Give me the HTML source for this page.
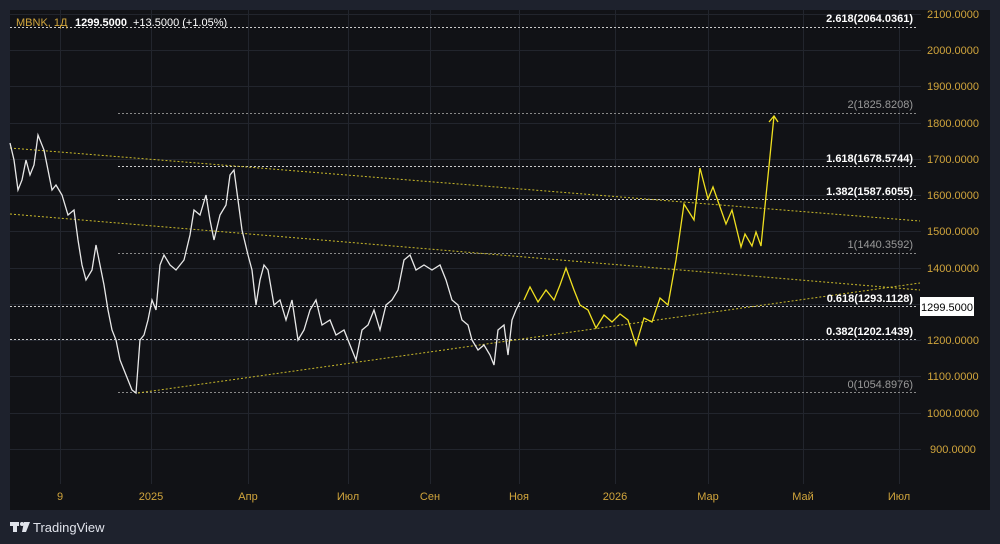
<!DOCTYPE html><html><head><meta charset="utf-8"><style>
body{margin:0;width:1000px;height:544px;background:#1e222d;overflow:hidden;font-family:"Liberation Sans",sans-serif}
#p{position:absolute;left:10px;top:10px;width:980px;height:500px;background:#111216}
.t{position:absolute;font-size:11px;color:#d1a53c}
</style></head><body><div id="p"></div>
<svg width="1000" height="544" style="position:absolute;left:0;top:0" font-family="Liberation Sans, sans-serif">
<g stroke="#22252d" stroke-width="1">
<line x1="60.5" y1="10" x2="60.5" y2="484"/><line x1="151.5" y1="10" x2="151.5" y2="484"/><line x1="248.5" y1="10" x2="248.5" y2="484"/><line x1="348.5" y1="10" x2="348.5" y2="484"/><line x1="430.5" y1="10" x2="430.5" y2="484"/><line x1="519.5" y1="10" x2="519.5" y2="484"/><line x1="615.5" y1="10" x2="615.5" y2="484"/><line x1="708.5" y1="10" x2="708.5" y2="484"/><line x1="803.5" y1="10" x2="803.5" y2="484"/><line x1="899.5" y1="10" x2="899.5" y2="484"/>
<line x1="10" y1="14.5" x2="921" y2="14.5"/><line x1="10" y1="50.5" x2="921" y2="50.5"/><line x1="10" y1="86.5" x2="921" y2="86.5"/><line x1="10" y1="123.5" x2="921" y2="123.5"/><line x1="10" y1="159.5" x2="921" y2="159.5"/><line x1="10" y1="195.5" x2="921" y2="195.5"/><line x1="10" y1="231.5" x2="921" y2="231.5"/><line x1="10" y1="268.5" x2="921" y2="268.5"/><line x1="10" y1="304.5" x2="921" y2="304.5"/><line x1="10" y1="340.5" x2="921" y2="340.5"/><line x1="10" y1="376.5" x2="921" y2="376.5"/><line x1="10" y1="413.5" x2="921" y2="413.5"/><line x1="10" y1="449.5" x2="921" y2="449.5"/>
</g>
<g stroke-dasharray="2,2" stroke-width="1" fill="none">
<line x1="10" y1="27.5" x2="918" y2="27.5" stroke="#ccc"/>
<line x1="118" y1="113.5" x2="918" y2="113.5" stroke="#888"/>
<line x1="118" y1="166.5" x2="918" y2="166.5" stroke="#ccc"/>
<line x1="118" y1="199.5" x2="918" y2="199.5" stroke="#ccc"/>
<line x1="118" y1="253.5" x2="918" y2="253.5" stroke="#888"/>
<line x1="10" y1="306.5" x2="918" y2="306.5" stroke="#ccc"/>
<line x1="10" y1="339.5" x2="918" y2="339.5" stroke="#ccc"/>
<line x1="118" y1="392.5" x2="918" y2="392.5" stroke="#888"/>
<g stroke="#c9b92a"><line x1="10" y1="148" x2="920" y2="221"/><line x1="10" y1="214" x2="920" y2="290"/><line x1="138" y1="393" x2="920" y2="283"/></g>
</g>
<polyline fill="none" stroke="#e8e8e8" stroke-width="1.3" points="10,143 14,160 18,190 22,180 26,160 30,175 34,165 38,135 44,150 48,170 52,190 56,185 62,195 68,215 74,210 78,240 82,265 86,280 92,270 96,245 100,265 104,285 108,310 112,330 116,340 120,360 124,370 128,380 132,390 136,393 140,340 144,335 148,320 152,300 156,310 160,265 164,255 170,265 176,270 184,260 190,235 194,210 200,215 206,195 210,220 214,240 220,215 226,205 230,175 234,170 238,200 242,230 248,255 252,270 256,305 260,280 264,265 268,270 274,305 280,300 286,320 292,300 298,340 304,330 310,310 316,300 322,325 330,320 336,335 344,330 350,345 356,360 362,330 368,325 374,310 380,330 386,305 392,300 398,290 404,260 410,255 416,270 424,265 432,270 440,265 446,280 452,300 458,305 462,320 468,325 472,340 478,350 484,345 490,355 494,365 498,330 504,325 508,355 512,320 516,310 520,302"/>
<polyline fill="none" stroke="#f0e020" stroke-width="1.3" points="524,300 530,287 538,302 546,290 554,300 560,285 566,268 574,290 580,305 588,310 596,328 604,315 612,322 620,314 628,320 636,345 644,318 652,322 660,298 668,305 676,260 684,204 694,220 700,168 708,199 713,187 726,224 732,210 741,247 745,234 752,246 756,232 761,246 774,116"/>
<polyline fill="none" stroke="#f0e020" stroke-width="1.3" points="769,122 774,116 778,122"/>
<g font-size="11" font-weight="bold" fill="#fff" text-anchor="end">
<text x="913" y="22">2.618(2064.0361)</text><text x="913" y="162">1.618(1678.5744)</text><text x="913" y="195">1.382(1587.6055)</text><text x="913" y="302">0.618(1293.1128)</text><text x="913" y="335">0.382(1202.1439)</text></g>
<g font-size="11" fill="#999" text-anchor="end"><text x="913" y="108">2(1825.8208)</text><text x="913" y="248">1(1440.3592)</text><text x="913" y="388">0(1054.8976)</text></g>
<g font-size="11" fill="#d1a53c" text-anchor="middle">
<text x="953" y="18">2100.0000</text><text x="953" y="54">2000.0000</text><text x="953" y="90">1900.0000</text><text x="953" y="127">1800.0000</text><text x="953" y="163">1700.0000</text><text x="953" y="199">1600.0000</text><text x="953" y="235">1500.0000</text><text x="953" y="272">1400.0000</text><text x="953" y="344">1200.0000</text><text x="953" y="380">1100.0000</text><text x="953" y="417">1000.0000</text><text x="953" y="453">900.0000</text>
<text x="60" y="500">9</text><text x="151" y="500">2025</text><text x="248" y="500">Апр</text><text x="348" y="500">Июл</text><text x="430" y="500">Сен</text><text x="519" y="500">Ноя</text><text x="615" y="500">2026</text><text x="708" y="500">Мар</text><text x="803" y="500">Май</text><text x="899" y="500">Июл</text></g>
<rect x="920" y="297" width="54" height="19" fill="#fff"/>
<text x="947" y="311" font-size="11" fill="#000" text-anchor="middle">1299.5000</text>
<text x="16" y="26" font-size="11" fill="#d1a53c">MBNK, 1Д</text>
<text x="75" y="26" font-size="11" font-weight="bold" fill="#fff">1299.5000</text>
<text x="133" y="26" font-size="11" fill="#fff">+13.5000 (+1.05%)</text>
<g fill="#e0e3eb"><rect x="10" y="522" width="9" height="4"/><rect x="13" y="522" width="4" height="10"/><circle cx="22" cy="524" r="2"/><polygon points="24,522 30,522 26,532 22,532"/></g>
<text x="33" y="532" font-size="13" fill="#e0e3eb">TradingView</text>
</svg></body></html>
